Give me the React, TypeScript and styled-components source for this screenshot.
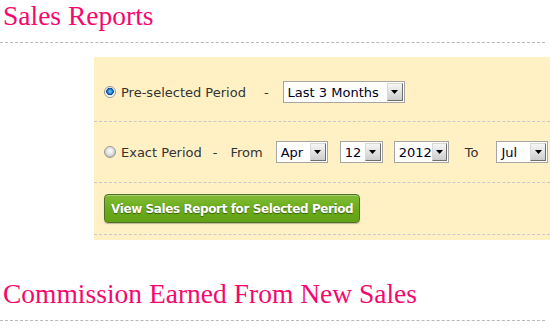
import React, {FC, useState} from 'react'
import styled, {createGlobalStyle} from 'styled-components'

const GlobalStyle = createGlobalStyle`
    body {
        margin: 0;
        background: #ffffff;
        font-family: "DejaVu Sans", Verdana, sans-serif;
    }
`

const Page = styled.div`
    width: 550px;
    height: 330px;
    overflow: hidden;
    display: flex;
    flex-direction: column;
`

const Heading = styled.h1`
    margin: 0 5px 0 0;
    padding: 0 0 10px 3px;
    height: 32px;
    border-bottom: 1px dashed #b8b8b8;
    font-family: "Liberation Serif", "DejaVu Serif", serif;
    font-weight: normal;
    font-size: 27.5px;
    line-height: 31px;
    color: #f5086e;
`

const SecondHeading = styled(Heading)`
    margin-top: 38px;
`

const Panel = styled.div`
    margin: 14px 0 0 94px;
    padding-bottom: 5px;
    background: #fff1c4;
    display: flex;
    flex-direction: column;
`

const Row = styled.div<{$height: number, $top?: number}>`
    height: ${p => p.$height}px;
    box-sizing: border-box;
    padding: ${p => p.$top || 0}px 0 0 10px;
    border-bottom: 1px dashed #c9c9cf;
    display: flex;
    align-items: center;
    font-size: 13px;
    color: #333333;
    white-space: nowrap;
`

const RadioLabel = styled.label`
    display: flex;
    align-items: center;
    gap: 5px;
    cursor: pointer;
`

const RadioDot = styled.span<{$checked: boolean}>`
    width: 12px;
    height: 12px;
    box-sizing: border-box;
    border-radius: 50%;
    border: 1px solid #9a9a9a;
    background: ${p => p.$checked
        ? 'radial-gradient(circle at 50% 45%, #7fd0ff 0, #1a78c8 2.5px, #0a3f8a 3.5px, #e6e6e6 4px, #ffffff 5px)'
        : 'radial-gradient(circle at 50% 40%, #ffffff 0, #dcdcdc 4px, #b8b8b8 6px)'};
`

const Sep = styled.span<{$left: number, $right: number}>`
    margin: 0 ${p => p.$right}px 0 ${p => p.$left}px;
`

const Select = styled.span<{$width: number, $left: number}>`
    width: ${p => p.$width}px;
    height: 22px;
    margin-left: ${p => p.$left}px;
    box-sizing: border-box;
    border: 1px solid #a5a5a5;
    background: #ffffff;
    display: flex;
    align-items: center;
    justify-content: space-between;
    padding-left: 4px;
    font-family: "DejaVu Sans", Tahoma, sans-serif;
    font-size: 13px;
    color: #000022;
`

const SelectArrow = styled.span`
    width: 16px;
    height: 18px;
    margin-right: 1px;
    box-sizing: border-box;
    border: 1px solid #d8d8d8;
    border-right-color: #6e6e6e;
    border-bottom-color: #6e6e6e;
    background: linear-gradient(#f6f6f6, #cdcdcd);
    display: flex;
    align-items: center;
    justify-content: center;
`

const ArrowIcon = () => (
    <svg width="7" height="4" viewBox="0 0 7 4">
        <polygon points="0,0 7,0 3.5,4" fill="#000000" />
    </svg>
)

const GreenButton = styled.button`
    height: 29px;
    padding: 0 6px;
    border: 1px solid #4e6f2c;
    border-radius: 4px;
    background: linear-gradient(#80bc34, #6aaa1a 55%, #62a214);
    box-shadow: 0 1px 1px rgba(0, 0, 0, 0.25), inset 0 1px 0 rgba(255, 255, 255, 0.3);
    font-family: "DejaVu Sans", Verdana, sans-serif;
    font-size: 12px;
    font-weight: bold;
    letter-spacing: -0.4px;
    color: #ffffff;
    text-shadow: 0 1px 1px rgba(0, 0, 0, 0.45);
    cursor: pointer;
`

type DropProps = {value: string, width: number, left: number}

const Drop: FC<DropProps> = ({value, width, left}) => (
    <Select $width={width} $left={left}>
        {value}
        <SelectArrow><ArrowIcon /></SelectArrow>
    </Select>
)

const App: FC = () => {
    const [mode, setMode] = useState<'preset' | 'exact'>('preset')

    return <Page>
        <GlobalStyle />
        <Heading>Sales Reports</Heading>
        <Panel>
            <Row $height={65} $top={6}>
                <RadioLabel onClick={() => setMode('preset')}>
                    <RadioDot $checked={mode == 'preset'} />
                    Pre-selected Period
                </RadioLabel>
                <Sep $left={18} $right={0}>-</Sep>
                <Drop value="Last 3 Months" width={122} left={14} />
            </Row>
            <Row $height={61}>
                <RadioLabel onClick={() => setMode('exact')}>
                    <RadioDot $checked={mode == 'exact'} />
                    Exact Period
                </RadioLabel>
                <Sep $left={11} $right={13}>-</Sep>
                From
                <Drop value="Apr" width={52} left={13} />
                <Drop value="12" width={43} left={12} />
                <Drop value="2012" width={55} left={11} />
                <Sep $left={16} $right={0}>To</Sep>
                <Drop value="Jul" width={52} left={18} />
            </Row>
            <Row $height={52}>
                <GreenButton>View Sales Report for Selected Period</GreenButton>
            </Row>
        </Panel>
        <SecondHeading>Commission Earned From New Sales</SecondHeading>
    </Page>
}

export default App
